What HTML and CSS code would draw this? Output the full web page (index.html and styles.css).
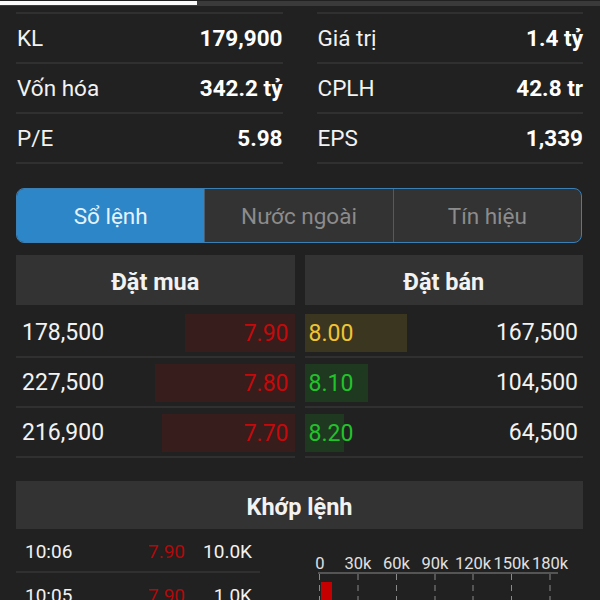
FILE: index.html
```html
<!DOCTYPE html>
<html lang="vi">
<head>
    <meta charset="UTF-8">
    <meta name="viewport" content="width=device-width, initial-scale=1.0">
    <title>Chi tiết mã</title>
    <link rel="stylesheet" href="styles.css">
</head>
<body>

<div class="progress"><div class="progress-fill"></div></div>

<div class="page">

<div class="stats">
    <div class="stats-col">
        <div class="stat-row"><span>KL</span><span class="stat-value">179,900</span></div>
        <div class="stat-row"><span>Vốn hóa</span><span class="stat-value">342.2 tỷ</span></div>
        <div class="stat-row"><span>P/E</span><span class="stat-value">5.98</span></div>
    </div>
    <div class="stats-col">
        <div class="stat-row"><span>Giá trị</span><span class="stat-value">1.4 tỷ</span></div>
        <div class="stat-row"><span>CPLH</span><span class="stat-value">42.8 tr</span></div>
        <div class="stat-row"><span>EPS</span><span class="stat-value">1,339</span></div>
    </div>
</div>

<div class="tabs">
    <div class="tab active">Sổ lệnh</div>
    <div class="tab">Nước ngoài</div>
    <div class="tab">Tín hiệu</div>
</div>

<div class="book">
    <div class="book-col buy">
        <div class="book-head">Đặt mua</div>
        <div class="book-row">
            <span class="vol">178,500</span>
            <span class="bar red" style="width: 110px">7.90</span>
        </div>
        <div class="book-row">
            <span class="vol">227,500</span>
            <span class="bar red" style="width: 140px">7.80</span>
        </div>
        <div class="book-row">
            <span class="vol">216,900</span>
            <span class="bar red" style="width: 133px">7.70</span>
        </div>
    </div>
    <div class="book-col sell">
        <div class="book-head">Đặt bán</div>
        <div class="book-row">
            <span class="bar yellow" style="width: 102px">8.00</span>
            <span class="vol">167,500</span>
        </div>
        <div class="book-row">
            <span class="bar green" style="width: 63px">8.10</span>
            <span class="vol">104,500</span>
        </div>
        <div class="book-row">
            <span class="bar green" style="width: 39px">8.20</span>
            <span class="vol">64,500</span>
        </div>
    </div>
</div>

<div class="match-head">Khớp lệnh</div>

<div class="match">
    <div class="trades">
        <div class="trade-row">
            <span class="t-time">10:06</span>
            <span class="t-price">7.90</span>
            <span class="t-vol">10.0K</span>
        </div>
        <div class="trade-row">
            <span class="t-time">10:05</span>
            <span class="t-price">7.90</span>
            <span class="t-vol">1.0K</span>
        </div>
    </div>

    <svg class="chart" width="283" height="70" viewBox="0 0 283 70">
        <g class="chart-labels">
            <text x="20" y="38">0</text>
            <text x="58" y="38">30k</text>
            <text x="96.5" y="38">60k</text>
            <text x="135" y="38">90k</text>
            <text x="173" y="38">120k</text>
            <text x="211.5" y="38">150k</text>
            <text x="250" y="38">180k</text>
        </g>
        <line x1="18" y1="42" x2="258" y2="42" stroke="#8a8a8a" stroke-width="1"/>
        <g stroke="#8a8a8a" stroke-width="1" stroke-dasharray="6 5">
            <line x1="19.5" y1="43" x2="19.5" y2="70"/>
            <line x1="58" y1="43" x2="58" y2="70"/>
            <line x1="96.5" y1="43" x2="96.5" y2="70"/>
            <line x1="135" y1="43" x2="135" y2="70"/>
            <line x1="173" y1="43" x2="173" y2="70"/>
            <line x1="211.5" y1="43" x2="211.5" y2="70"/>
            <line x1="250" y1="43" x2="250" y2="70"/>
        </g>
        <rect x="21" y="51" width="11" height="19" fill="#c40000"/>
    </svg>
</div>

</div>

</body>
</html>
```

FILE: styles.css
```css
body {
    margin: 0;
    background-color: #212121;
    color: #f2f2f2;
    font-family: Roboto, "Liberation Sans", sans-serif;
    overflow: hidden;
}
.progress {
    height: 5px;
    background-color: #3a3a3a;
}
.progress-fill {
    width: 197px;
    height: 4px;
    margin-top: 1px;
    background-color: #fafafa;
}
.page {
    padding: 0 17px 0 16px;
}

/* stats */
.stats {
    display: flex;
    gap: 34px;
    margin-top: 6px;
}
.stats-col {
    flex: 1;
    border-top: 2px solid #303030;
}
.stat-row {
    display: flex;
    justify-content: space-between;
    align-items: center;
    height: 48px;
    border-bottom: 2px solid #303030;
    font-size: 22.5px;
    padding: 0 0 0 1px;
}
.stat-value {
    font-weight: bold;
    color: #fff;
}

/* tabs */
.tabs {
    display: flex;
    margin-top: 24px;
    height: 53px;
    border: 1.5px solid #3a7fb6;
    border-radius: 8px;
    overflow: hidden;
    background-color: #333;
    margin-right: 1px;
}
.tab {
    flex: 1;
    display: flex;
    align-items: center;
    justify-content: center;
    font-size: 22.5px;
    color: #8c8c8c;
    border-left: 1.5px solid #4b5d6d;
}
.tab.active {
    background-color: #2d86c8;
    color: #e4f3ff;
    border-left: none;
}

/* order book */
.book {
    display: flex;
    gap: 10px;
    margin-top: 12px;
}
.book-col {
    flex: 1;
}
.book-head {
    height: 50px;
    box-sizing: border-box;
    padding-top: 3px;
    display: flex;
    align-items: center;
    justify-content: center;
    background-color: #333;
    font-size: 23.5px;
    font-weight: bold;
    margin-bottom: 3px;
}
.book-row {
    display: flex;
    justify-content: space-between;
    align-items: flex-end;
    height: 50px;
    box-sizing: border-box;
    padding-bottom: 4px;
    border-bottom: 2px solid #303030;
    font-size: 23px;
}
.vol {
    line-height: 38px;
}
.buy .vol {
    padding-left: 6px;
}
.sell .vol {
    padding-right: 5px;
}
.bar {
    height: 38px;
    display: flex;
    align-items: center;
    box-sizing: border-box;
}
.buy .bar {
    justify-content: flex-end;
    padding-right: 6px;
}
.sell .bar {
    padding-left: 4px;
}
.red {
    background-color: #381d1d;
    color: #c40a0a;
}
.yellow {
    background-color: #3b3620;
    color: #f0c432;
}
.green {
    background-color: #1f3921;
    color: #22c22a;
}

/* matched orders */
.match-head {
    height: 48px;
    box-sizing: border-box;
    padding-top: 3px;
    margin-top: 23px;
    display: flex;
    align-items: center;
    justify-content: center;
    background-color: #333;
    font-size: 23.5px;
    font-weight: bold;
}
.match {
    display: flex;
}
.trades {
    width: 244px;
}
.trade-row {
    display: flex;
    align-items: center;
    height: 40px;
    padding-top: 2px;
    border-bottom: 2px solid #303030;
    font-size: 19px;
}
.t-time {
    width: 60px;
    padding-left: 9px;
}
.t-price {
    width: 100px;
    text-align: right;
    color: #b00a0a;
}
.t-vol {
    flex: 1;
    text-align: right;
    padding-right: 8px;
}
.chart {
    margin-left: 40px;
    margin-top: 2px;
}
.chart-labels text {
    fill: #e0e0e0;
    font-size: 16.5px;
    font-family: Roboto, "Liberation Sans", sans-serif;
    text-anchor: middle;
}
```
